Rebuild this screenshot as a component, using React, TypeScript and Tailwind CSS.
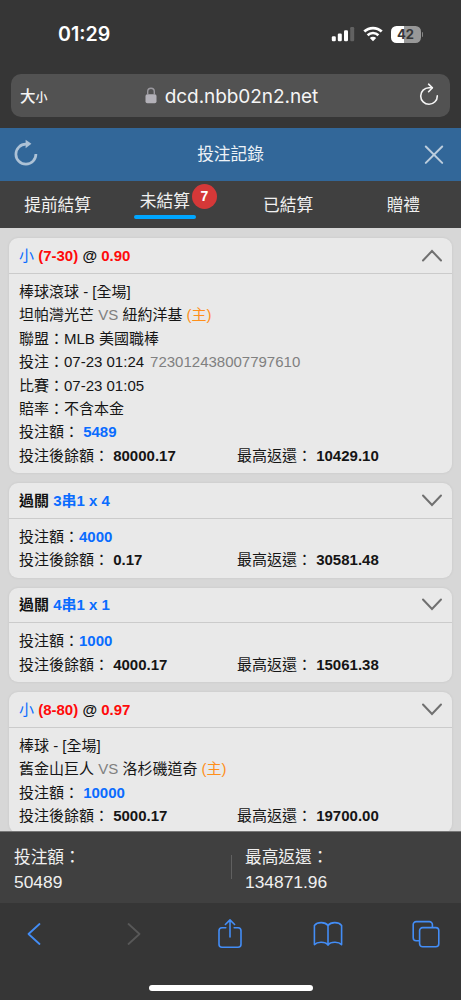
import type { ReactNode } from 'react';

interface Bet {
  id: string;
  title: ReactNode;
  lines: ReactNode[];
  stake: string;
  spacedStake?: boolean;
  balance: string;
  maxReturn: string;
  open?: boolean;
}

interface Tab {
  label: string;
  active?: boolean;
  count?: number;
}

const TABS: Tab[] = [
  { label: '提前結算' },
  { label: '未結算', active: true, count: 7 },
  { label: '已結算' },
  { label: '贈禮' },
];

const OddsTitle = ({ line, odds }: { line: string; odds: string }) => (
  <>
    <span className="font-normal text-[#0a6cff]">小</span> <span className="text-[#ff0a0a]">({line})</span> @{' '}
    <span className="text-[#ff0a0a]">{odds}</span>
  </>
);

const ParlayTitle = ({ type }: { type: string }) => (
  <>
    過關 <span className="text-[#0a6cff]">{type}</span>
  </>
);

const Match = ({ away, home }: { away: string; home: string }) => (
  <>
    {away} <span className="text-[#808080]">VS</span> {home} <span className="text-[#ff8f1a]">(主)</span>
  </>
);

const BETS: Bet[] = [
  {
    id: '723012438007797610',
    title: <OddsTitle line="7-30" odds="0.90" />,
    lines: [
      '棒球滾球 - [全場]',
      <Match away="坦帕灣光芒" home="紐約洋基" />,
      '聯盟：MLB 美國職棒',
      <>
        投注：07-23 01:24<span className="ml-[6px] text-[#808080]">723012438007797610</span>
      </>,
      '比賽：07-23 01:05',
      '賠率：不含本金',
    ],
    stake: '5489',
    spacedStake: true,
    balance: '80000.17',
    maxReturn: '10429.10',
    open: true,
  },
  { id: 'parlay-3', title: <ParlayTitle type="3串1 x 4" />, lines: [], stake: '4000', balance: '0.17', maxReturn: '30581.48' },
  { id: 'parlay-4', title: <ParlayTitle type="4串1 x 1" />, lines: [], stake: '1000', balance: '4000.17', maxReturn: '15061.38' },
  {
    id: 'dodgers',
    title: <OddsTitle line="8-80" odds="0.97" />,
    lines: ['棒球 - [全場]', <Match away="舊金山巨人" home="洛杉磯道奇" />],
    stake: '10000',
    spacedStake: true,
    balance: '5000.17',
    maxReturn: '19700.00',
  },
];

const StatusBar = () => (
  <div className="flex h-[74px] shrink-0 items-start justify-between pt-[22px] pr-[38px] pl-[58px] font-['Inter',sans-serif] text-white">
    <span className="text-[19.6px] leading-[25px] font-semibold">01:29</span>
    <div className="flex h-6 items-center">
      <svg width="24" height="16" viewBox="0 0 24 16" className="mr-[8px]">
        <rect x="0.8" y="10.3" width="4" height="5" rx="1.2" fill="#fff" />
        <rect x="6.8" y="7.5" width="4" height="7.8" rx="1.2" fill="#fff" />
        <rect x="13" y="4.2" width="4" height="11.1" rx="1.2" fill="#fff" />
        <rect x="19.2" y="1" width="4" height="14.3" rx="1.2" fill="#626262" />
      </svg>
      <svg width="20" height="16" viewBox="0 0 20 16" className="mr-[8px]">
        <path d="M1.3 5.6a12.5 12.5 0 0 1 17.4 0" fill="none" stroke="#fff" strokeWidth="2.8" />
        <path d="M4.6 9.2a7.8 7.8 0 0 1 10.8 0" fill="none" stroke="#fff" strokeWidth="2.6" />
        <path d="M10 15.2 6.8 12a4.6 4.6 0 0 1 6.4 0z" fill="#fff" />
      </svg>
      <div className="flex h-[17px] w-[30px] items-center justify-center rounded-[5.5px] bg-linear-to-r from-white from-42% to-[#989898] to-42% pt-px text-[13px] leading-none font-bold text-[#363636]">
        42
      </div>
      <div className="ml-px h-[5px] w-[1.5px] rounded-r-full bg-[#858585]" />
    </div>
  </div>
);

const AddressBar = () => (
  <div className="mx-[11px] flex h-[42.5px] shrink-0 items-center justify-between rounded-[10px] bg-[#525252] pr-[11px] pl-[9px] text-[#f5f5f5]">
    <div className="flex w-[60px] items-baseline pt-[2px] font-medium">
      <span className="text-[15.5px]">大</span>
      <span className="text-[12px]">小</span>
    </div>
    <div className="mr-[3px] flex items-center pt-[3px]">
      <svg width="12" height="17" viewBox="0 0 12 17" className="mr-[8px] mb-[3px]">
        <rect x="0.5" y="7.3" width="11" height="9" rx="1.8" fill="#b3b1b8" />
        <path d="M2.7 8V4.6a3.3 3.3 0 0 1 6.6 0V8" fill="none" stroke="#9b999f" strokeWidth="1.4" />
      </svg>
      <span className="font-['Inter',sans-serif] text-[19px] tracking-[-0.06px] whitespace-nowrap">dcd.nbb02n2.net</span>
    </div>
    <div className="flex w-[53px] justify-end pb-[2px]">
      <svg width="20" height="23" viewBox="0 0 20 23" fill="none" stroke="#f5f5f5" strokeWidth="1.6" strokeLinecap="round" strokeLinejoin="round">
        <path d="M18.3 12.9A8.3 8.3 0 1 1 10 4.7h3.2" />
        <path d="m9.6 1.2 3.8 3.6-3.8 3.9" />
      </svg>
    </div>
  </div>
);

const TitleBar = () => (
  <header className="mt-[11.5px] flex h-[53px] shrink-0 items-center justify-between bg-[#326799] pr-[17px] pl-[13px]">
    <svg width="26" height="28" viewBox="0 0 26 28" className="mb-[4px]">
      <path d="M22.9 15A10 10 0 1 1 13 5.2" fill="none" stroke="#adc2d6" strokeWidth="2.7" />
      <path d="M12.6 0.8v8.4l5.8-4.4z" fill="#adc2d6" />
    </svg>
    <h1 className="mr-[2px] text-[16.7px] text-[#eef3f7]">投注記錄</h1>
    <svg width="20" height="20" viewBox="0 0 20 20" stroke="#bccddd" strokeWidth="2" strokeLinecap="round">
      <path d="m1.8 1.5 16.4 16.4M18.2 1.5 1.8 17.9" />
    </svg>
  </header>
);

const TabBar = () => (
  <nav className="grid h-[47px] shrink-0 grid-cols-4 bg-[#404040] text-[16.7px] text-[#f0f0f0]">
    {TABS.map((tab) => (
      <div key={tab.label} className="flex justify-center">
        {tab.active ? (
          <div className="relative mr-[16px] h-[38px] w-[62px] text-center leading-[41px] whitespace-nowrap">
            {tab.label}
            <div className="absolute top-[34px] h-[4px] w-full rounded-full bg-[#00a6ff]" />
            <span className="absolute top-[3px] left-[58px] flex size-[25px] items-center justify-center rounded-full bg-[#d53838] font-['Liberation_Sans',sans-serif] text-[14px] font-bold text-white">
              {tab.count}
            </span>
          </div>
        ) : (
          <span className="leading-[50px]">{tab.label}</span>
        )}
      </div>
    ))}
  </nav>
);

const BetCard = ({ bet }: { bet: Bet }) => (
  <article className="shrink-0 rounded-[9px] bg-[#e9e9e9] text-[15px] text-[#151515] shadow-[0_0_3px_rgba(0,0,0,0.08)]">
    <div className="flex h-[35.6px] items-center justify-between border-b border-[#cbcbcb] pr-[9px] pl-[10px]">
      <h2 className="pt-px font-bold text-[#111]">{bet.title}</h2>
      <svg
        width="22"
        height="13"
        viewBox="0 0 22 13"
        fill="none"
        stroke="#707070"
        strokeWidth="2"
        strokeLinecap="round"
        className={bet.open ? 'rotate-180' : ''}
      >
        <path d="m2 1.5 9 9.5 9-9.5" />
      </svg>
    </div>
    <div className="px-[10px] pt-[6.1px] pb-[5.9px] leading-[23.42px]">
      {bet.lines.map((line, i) => (
        <p key={i}>{line}</p>
      ))}
      <p>
        投注額：{bet.spacedStake && ' '}
        <span className="font-bold text-[#0a6cff]">{bet.stake}</span>
      </p>
      <div className="flex">
        <p className="w-[218px]">
          投注後餘額： <b>{bet.balance}</b>
        </p>
        <p>
          最高返還： <b>{bet.maxReturn}</b>
        </p>
      </div>
    </div>
  </article>
);

const Totals = () => (
  <div className="flex h-[72px] shrink-0 items-center border-t border-[#777] bg-[#404040] pt-[4px] pl-[14px] text-[#f0f0f0]">
    <div className="w-[217px] leading-6">
      <p className="text-[16.7px]">投注額：</p>
      <p className="text-[17.4px]">50489</p>
    </div>
    <div className="mr-[13px] mb-[5px] h-6 w-px bg-[#606060]" />
    <div className="leading-6">
      <p className="text-[16.7px]">最高返還：</p>
      <p className="text-[17.4px]">134871.96</p>
    </div>
  </div>
);

const BrowserToolbar = () => (
  <footer className="flex h-[97px] shrink-0 flex-col items-center justify-between bg-[#363636] pt-[15px] pb-[9px]">
    <div className="flex w-full items-center justify-between pr-[20px] pl-[19px] *:flex *:w-[30px] *:justify-center">
      <div>
        <svg width="16" height="24" viewBox="0 0 16 24" fill="none" stroke="#438df6" strokeWidth="1.8" strokeLinecap="round" strokeLinejoin="round">
          <path d="M13.5 2 2.5 12l11 10" />
        </svg>
      </div>
      <div className="pl-[4px]">
        <svg width="16" height="24" viewBox="0 0 16 24" fill="none" stroke="#585858" strokeWidth="1.8" strokeLinecap="round" strokeLinejoin="round">
          <path d="m2.5 2 11 10-11 10" />
        </svg>
      </div>
      <div>
        <svg width="24" height="31" viewBox="0 0 24 31" fill="none" stroke="#438df6" strokeWidth="1.6" strokeLinecap="round" strokeLinejoin="round">
          <path d="M7.8 9.8H4a3 3 0 0 0-3 3v13.4a3 3 0 0 0 3 3h16a3 3 0 0 0 3-3V12.8a3 3 0 0 0-3-3h-3.8" />
          <path d="M12 19V2M7.4 6.5 12 1.9l4.600 4.600" />
        </svg>
      </div>
      <div>
        <svg width="30" height="26" viewBox="0 0 30 26" fill="none" stroke="#438df6" strokeWidth="1.6" strokeLinecap="round" strokeLinejoin="round">
          <path d="M15 4.4C12.2.8 4.5.6 1.4 4.4v19.2c3.1-3.3 10.8-3 13.6.2 2.8-3.2 10.5-3.5 13.6-.2V4.4C25.5.6 17.8.8 15 4.4z" />
          <path d="M15 4.4V24" />
        </svg>
      </div>
      <div>
        <svg width="28" height="28" viewBox="0 0 28 28" fill="none" stroke="#438df6" strokeWidth="1.6">
          <rect x="7.6" y="7.6" width="19.2" height="19.2" rx="3" />
          <path d="M7.6 20.8H4.2a3 3 0 0 1-3-3V4.6a3 3 0 0 1 3-3h13.2a3 3 0 0 1 3 3v3" />
        </svg>
      </div>
    </div>
    <div className="h-[6px] w-[164px] rounded-full bg-white" />
  </footer>
);

export default function App() {
  return (
    <div
      lang="zh-Hant"
      className="flex h-[1000px] w-[461px] flex-col overflow-hidden bg-[#363636] font-['Liberation_Sans','Noto_Sans_CJK_TC',sans-serif]"
    >
      <StatusBar />
      <AddressBar />
      <TitleBar />
      <TabBar />
      <main className="flex min-h-0 flex-1 flex-col gap-[10px] overflow-hidden bg-[#d7d7d7] px-[9px] pt-[10.2px]">
        {BETS.map((bet) => (
          <BetCard key={bet.id} bet={bet} />
        ))}
      </main>
      <Totals />
      <BrowserToolbar />
    </div>
  );
}
